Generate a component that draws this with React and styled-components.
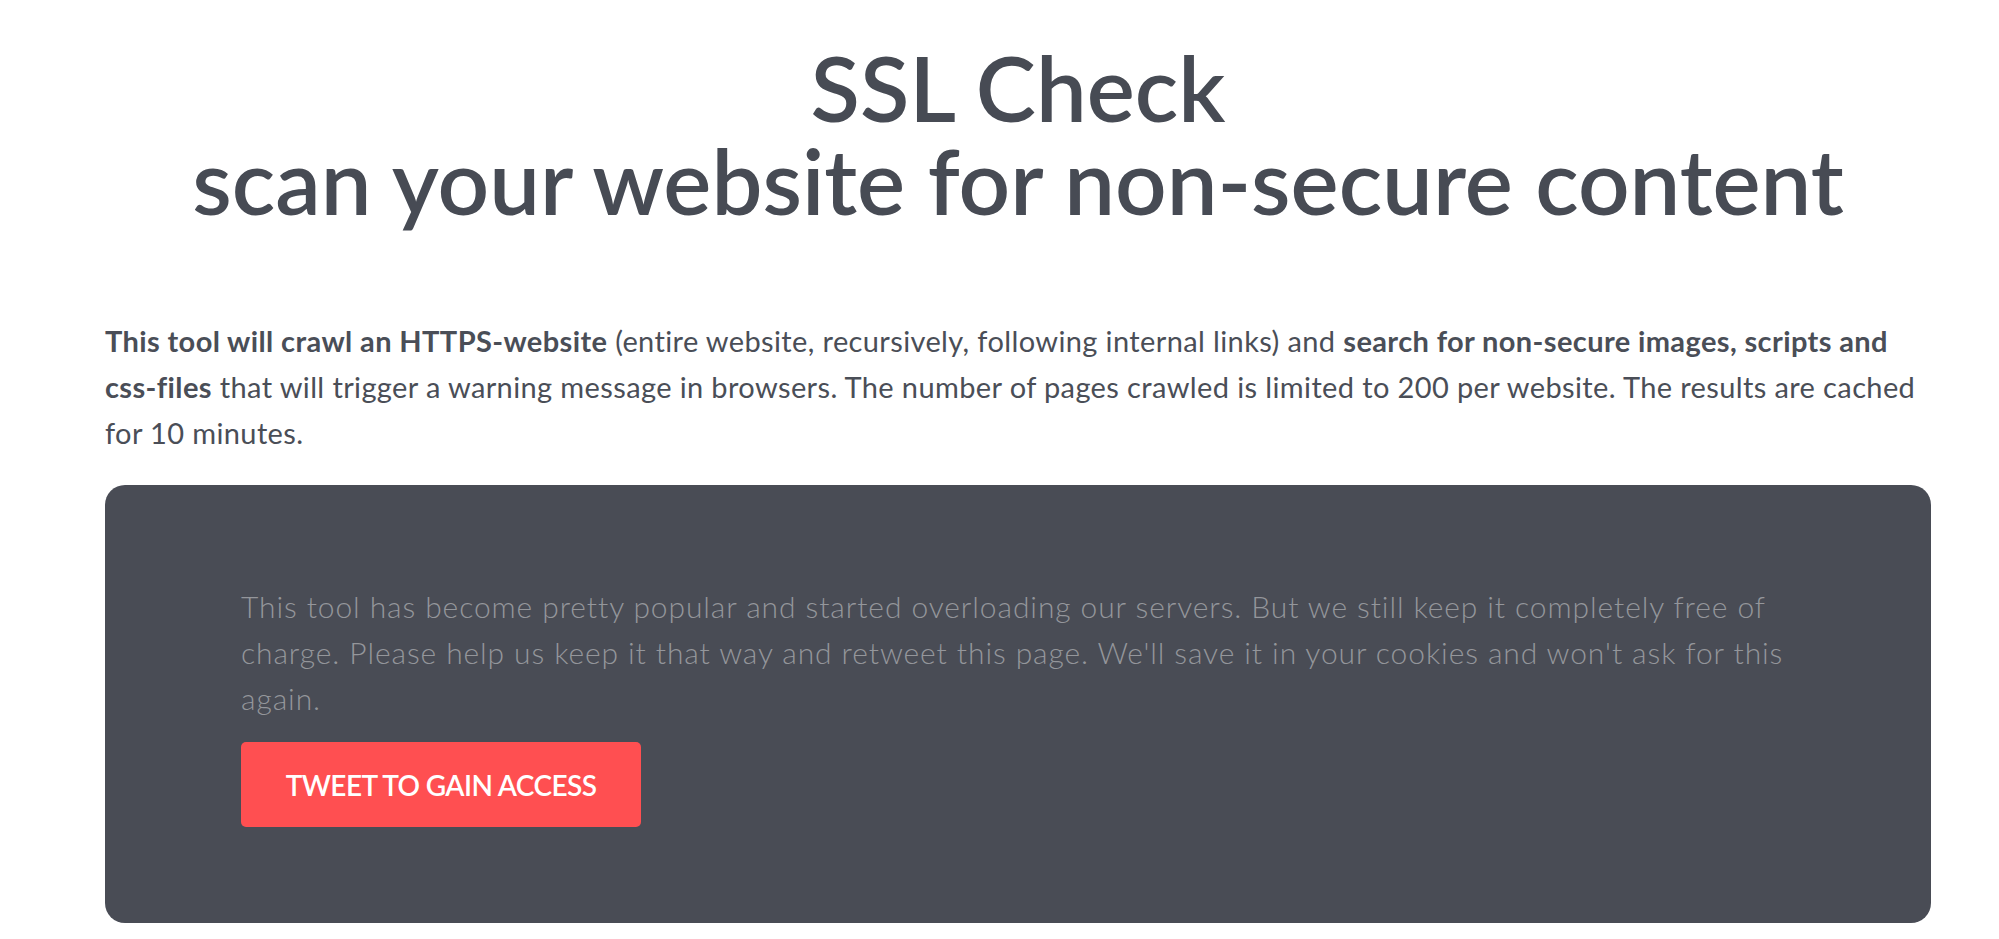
import styled, { createGlobalStyle } from 'styled-components'

const GlobalStyle = createGlobalStyle`
  body {
    margin: 0;
    background: #fff;
    font-family: Lato, "Open Sans", sans-serif;
    color: #4a4e57;
  }
`

const Page = styled.main`
  width: 1826px;
  margin: 0 0 0 105px;
  padding-top: 41px;
`

const Title = styled.h1`
  margin: 0;
  text-align: center;
  font-size: 90.5px;
  line-height: 93px;
  font-weight: 600;
  color: #474b54;
`

const Intro = styled.p`
  margin: 91px 0 29px;
  font-size: 29px;
  line-height: 46px;
  letter-spacing: 0.38px;
  font-weight: 400;
  color: #4a4e57;

  b {
    font-weight: 700;
  }
`

const Notice = styled.section`
  display: flex;
  flex-direction: column;
  align-items: flex-start;
  gap: 21px;
  height: 438px;
  box-sizing: border-box;
  padding: 98px 136px 96px;
  border-radius: 20px;
  background: #494c55;
`

const NoticeText = styled.p`
  margin: 0;
  font-size: 30px;
  line-height: 46px;
  letter-spacing: 0.9px;
  font-weight: 300;
  color: #94969b;
`

const TweetButton = styled.button`
  width: 400px;
  height: 85px;
  border: 0;
  border-radius: 5px;
  background: #ff4f51;
  color: #fff;
  font-family: Lato, "Open Sans", sans-serif;
  font-size: 28px;
  letter-spacing: -0.6px;
  font-weight: 600;
  text-transform: uppercase;
  cursor: pointer;
`

export default function App() {
  return (
    <>
      <GlobalStyle />
      <Page>
        <Title>
          SSL Check
          <br />
          scan your website for non-secure content
        </Title>
        <Intro>
          <b>This tool will crawl an HTTPS-website</b> (entire website, recursively, following internal links) and{' '}
          <b>search for non-secure images, scripts and css-files</b> that will trigger a warning message in browsers. The
          number of pages crawled is limited to 200 per website. The results are cached for 10 minutes.
        </Intro>
        <Notice>
          <NoticeText>
            This tool has become pretty popular and started overloading our servers. But we still keep it completely free
            of charge. Please help us keep it that way and retweet this page. We'll save it in your cookies and won't ask
            for this again.
          </NoticeText>
          <TweetButton>Tweet to gain access</TweetButton>
        </Notice>
      </Page>
    </>
  )
}
